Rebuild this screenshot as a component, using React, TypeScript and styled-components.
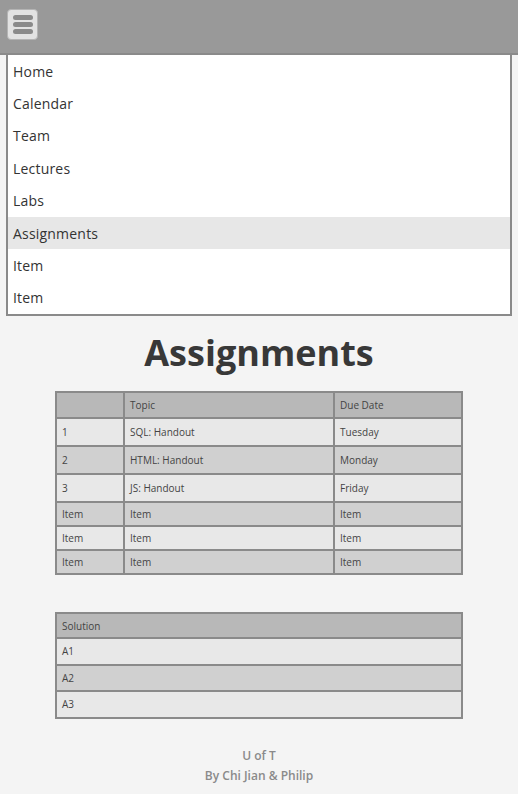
import * as React from 'react';
import styled, { createGlobalStyle } from 'styled-components';

const GlobalStyle = createGlobalStyle`
  html, body {
    margin: 0;
    padding: 0;
    background: #f4f4f4;
    font-family: 'Open Sans', 'Noto Sans', sans-serif;
    color: #333;
  }
`;

const TopBar = styled.header`
  height: 55px;
  background: #999999;
  border-bottom: 2px solid #8a8a8a;
  display: flex;
  align-items: flex-start;
  padding: 9px 0 0 7px;
  box-sizing: border-box;
`;

const MenuButton = styled.button`
  width: 31px;
  height: 31px;
  padding: 0;
  background: #e2e2e2;
  border: 1px solid #b4b4b4;
  border-radius: 4px;
  display: flex;
  flex-direction: column;
  justify-content: center;
  align-items: center;
  gap: 2px;
  cursor: pointer;
`;

const Bar = styled.span`
  display: block;
  width: 20px;
  height: 5px;
  border-radius: 3px;
  background: #8a8a8a;
`;

const Menu = styled.nav`
  margin: 0 6px;
  background: #fff;
  border: 2px solid #8a8a8a;
  border-top: none;
  display: flex;
  flex-direction: column;
`;

const MenuItem = styled.a<{ $active?: boolean }>`
  height: 32.4px;
  display: flex;
  align-items: center;
  padding: 0 5px;
  font-size: 14px;
  letter-spacing: 0.2px;
  color: #333;
  text-decoration: none;
  background: ${({ $active }) => ($active ? '#e7e7e7' : '#fff')};
`;

const Title = styled.h1`
  margin: 14px 0 16px;
  text-align: center;
  font-size: 36px;
  font-weight: 700;
  line-height: 45px;
  color: #383838;
`;

const Table = styled.table`
  width: 408px;
  margin: 0 auto;
  border-collapse: collapse;
  border: 2px solid #8a8a8a;
  font-size: 10px;
  color: #444;
`;

const Cell = styled.td<{ $h: number }>`
  border: 2px solid #8a8a8a;
  padding: 0 5px;
  height: ${({ $h }) => $h}px;
  text-align: left;
  vertical-align: middle;
`;

const Row = styled.tr<{ $shade: 'head' | 'light' | 'dark' }>`
  background: ${({ $shade }) =>
    $shade === 'head' ? '#b8b8b8' : $shade === 'light' ? '#e8e8e8' : '#d0d0d0'};
`;

const Spacer = styled.div`
  height: 37px;
`;

const Footer = styled.footer`
  margin-top: 27px;
  text-align: center;
  color: #8a8a8a;
  font-size: 12px;
  font-weight: 600;
  line-height: 20px;
`;

const navItems = ['Home', 'Calendar', 'Team', 'Lectures', 'Labs', 'Assignments', 'Item', 'Item'];

const assignments = [
  ['1', 'SQL: Handout', 'Tuesday'],
  ['2', 'HTML: Handout', 'Monday'],
  ['3', 'JS: Handout', 'Friday'],
  ['Item', 'Item', 'Item'],
  ['Item', 'Item', 'Item'],
  ['Item', 'Item', 'Item'],
];

const solutions = ['A1', 'A2', 'A3'];

export default function App() {
  return (
    <>
      <GlobalStyle />
      <TopBar>
        <MenuButton aria-label="menu">
          <Bar />
          <Bar />
          <Bar />
        </MenuButton>
      </TopBar>
      <Menu>
        {navItems.map((item, i) => (
          <MenuItem key={i} href="#" $active={item === 'Assignments'}>
            {item}
          </MenuItem>
        ))}
      </Menu>
      <Title>Assignments</Title>
      <Table>
        <tbody>
          <Row $shade="head">
            <Cell $h={24} style={{ width: 56 }}></Cell>
            <Cell $h={24} style={{ width: 198 }}>Topic</Cell>
            <Cell $h={24}>Due Date</Cell>
          </Row>
          {assignments.map((r, i) => (
            <Row key={i} $shade={i % 2 === 0 ? 'light' : 'dark'}>
              {r.map((c, j) => (
                <Cell key={j} $h={i < 3 ? 26 : 22}>{c}</Cell>
              ))}
            </Row>
          ))}
        </tbody>
      </Table>
      <Spacer />
      <Table>
        <tbody>
          <Row $shade="head">
            <Cell $h={23}>Solution</Cell>
          </Row>
          {solutions.map((s, i) => (
            <Row key={s} $shade={i % 2 === 0 ? 'light' : 'dark'}>
              <Cell $h={24.5}>{s}</Cell>
            </Row>
          ))}
        </tbody>
      </Table>
      <Footer>
        U of T
        <br />
        By Chi Jian &amp; Philip
      </Footer>
    </>
  );
}
